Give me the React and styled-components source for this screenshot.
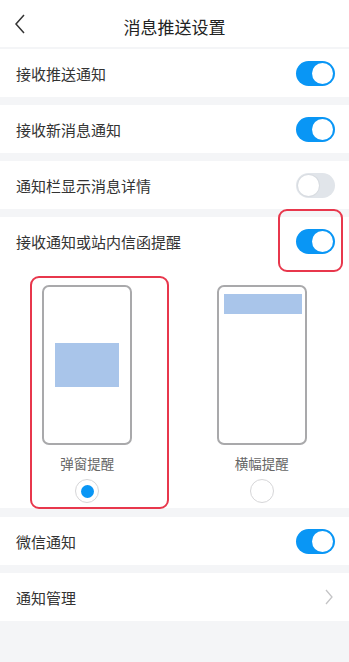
import React from "react";
import styled, { createGlobalStyle } from "styled-components";

const Global = createGlobalStyle`
  html, body { margin: 0; padding: 0; background: #f4f5f7; }
  body { font-family: "Noto Sans CJK SC", "Noto Sans", sans-serif; color: #333; }
  * { box-sizing: border-box; }
`;

const Page = styled.div`
  width: 349px;
  min-height: 662px;
  background: #f4f5f7;
  display: flex;
  flex-direction: column;
`;

const Header = styled.div`
  height: 47px;
  background: #fff;
  display: flex;
  align-items: center;
  justify-content: center;
  position: relative;
  margin-bottom: 2px;
`;

const Title = styled.div`
  font-size: 17px;
  color: #222;
  line-height: 1;
  margin-top: 5px;
`;

const Back = styled.svg`
  position: absolute;
  left: 13px;
  top: 13px;
`;

const Section = styled.div`
  background: #fff;
  margin-bottom: ${(p) => (p.$last ? 0 : p.$gap || 8)}px;
  position: relative;
`;

const Row = styled.div`
  height: 48px;
  display: flex;
  align-items: center;
  justify-content: space-between;
  padding: 0 14px 0 16px;
`;

const Label = styled.div`
  font-size: 15px;
  color: #333;
  line-height: 1;
`;

const Track = styled.div`
  width: 39px;
  height: 25px;
  border-radius: 13px;
  background: ${(p) => (p.$on ? "#0996f5" : "#e1e5ea")};
  display: flex;
  align-items: center;
  justify-content: ${(p) => (p.$on ? "flex-end" : "flex-start")};
  padding: 0 2px;
`;

const Knob = styled.div`
  width: 21px;
  height: 21px;
  border-radius: 50%;
  background: #fff;
  box-shadow: ${(p) => (p.$on ? "none" : "0 0 0 1px #d8dce1")};
`;

const Toggle = ({ on }) => (
  <Track $on={on}>
    <Knob $on={on} />
  </Track>
);

const Options = styled.div`
  display: grid;
  grid-template-columns: 1fr 1fr;
  padding-top: 20px;
  height: 243px;
`;

const Option = styled.div`
  display: flex;
  flex-direction: column;
  align-items: center;
  position: relative;
`;

const Phone = styled.div`
  width: 90px;
  height: 160px;
  border: 2px solid #a9a9ab;
  border-radius: 7px;
  position: relative;
  display: flex;
  flex-direction: column;
  align-items: ${(p) => (p.$banner ? "stretch" : "center")};
  justify-content: ${(p) => (p.$banner ? "flex-start" : "center")};
  padding: ${(p) => (p.$banner ? "7px 3px 0 5px" : "0")};
`;

const Popup = styled.div`
  width: 64px;
  height: 44px;
  background: #a9c5ea;
`;

const Banner = styled.div`
  height: 20px;
  background: #a9c5ea;
`;

const OptLabel = styled.div`
  margin-top: 10px;
  font-size: 13.5px;
  color: #666;
  line-height: 16px;
`;

const Radio = styled.div`
  margin-top: 8px;
  width: 24px;
  height: 24px;
  border-radius: 50%;
  border: 1px solid #d6d6d8;
  display: flex;
  align-items: center;
  justify-content: center;
`;

const Dot = styled.div`
  width: 13px;
  height: 13px;
  border-radius: 50%;
  background: #0996f5;
`;

const Highlight = styled.div`
  position: absolute;
  border: 2px solid #e8374c;
  border-radius: 9px;
  pointer-events: none;
`;

const OptionMark = styled(Highlight)`
  left: 30px;
  top: 59px;
  width: 139px;
  height: 233px;
`;

const ToggleMark = styled(Highlight)`
  right: 6px;
  top: -8px;
  width: 65px;
  height: 63px;
`;

const Chevron = styled.svg`
  margin-right: 1px;
`;

export default function App() {
  return (
    <>
      <Global />
      <Page>
        <Header>
          <Back width="14" height="22" viewBox="0 0 14 22">
            <path d="M11 2 L3 11 L11 20" fill="none" stroke="#333" strokeWidth="1.5" />
          </Back>
          <Title>消息推送设置</Title>
        </Header>
        <Section>
          <Row>
            <Label>接收推送通知</Label>
            <Toggle on />
          </Row>
        </Section>
        <Section>
          <Row>
            <Label>接收新消息通知</Label>
            <Toggle on />
          </Row>
        </Section>
        <Section>
          <Row>
            <Label>通知栏显示消息详情</Label>
            <Toggle on={false} />
          </Row>
        </Section>
        <Section $gap={9}>
          <Row>
            <Label>接收通知或站内信函提醒</Label>
            <Toggle on />
          </Row>
          <ToggleMark />
          <Options>
            <Option>
              <Phone>
                <Popup />
              </Phone>
              <OptLabel>弹窗提醒</OptLabel>
              <Radio>
                <Dot />
              </Radio>
            </Option>
            <Option>
              <Phone $banner>
                <Banner />
              </Phone>
              <OptLabel>横幅提醒</OptLabel>
              <Radio />
            </Option>
          </Options>
          <OptionMark />
        </Section>
        <Section>
          <Row>
            <Label>微信通知</Label>
            <Toggle on />
          </Row>
        </Section>
        <Section $last>
          <Row>
            <Label>通知管理</Label>
            <Chevron width="10" height="18" viewBox="0 0 10 18">
              <path d="M2 2 L8 9 L2 16" fill="none" stroke="#c4c4c6" strokeWidth="1.3" />
            </Chevron>
          </Row>
        </Section>
      </Page>
    </>
  );
}
